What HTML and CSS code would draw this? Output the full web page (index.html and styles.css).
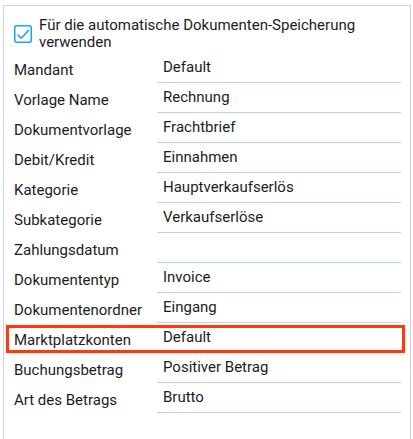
FILE: index.html
```html
<!DOCTYPE html>
<html lang="de">
<head>
<meta charset="utf-8">
<link rel="stylesheet" href="styles.css">
</head>
<body>
<div class="panel">
  <div class="header">
    <span class="checkbox">
      <svg width="18" height="18" viewBox="0 0 18 18"><rect x="0.75" y="0.75" width="16.5" height="16.5" rx="2" fill="none" stroke="#1aa3ef" stroke-width="1.5"/><path d="M3.5 9.5 L7.3 13.2 L14.8 5" fill="none" stroke="#1aa3ef" stroke-width="1.6"/></svg>
    </span>
    <span class="header-text">Für die automatische Dokumenten-Speicherung verwenden</span>
  </div>
  <div class="rows">
    <div class="row"><div class="label">Mandant</div><div class="value">Default</div></div>
    <div class="row"><div class="label">Vorlage Name</div><div class="value">Rechnung</div></div>
    <div class="row"><div class="label">Dokumentvorlage</div><div class="value">Frachtbrief</div></div>
    <div class="row"><div class="label">Debit/Kredit</div><div class="value">Einnahmen</div></div>
    <div class="row"><div class="label">Kategorie</div><div class="value">Hauptverkaufserlös</div></div>
    <div class="row"><div class="label">Subkategorie</div><div class="value">Verkaufserlöse</div></div>
    <div class="row"><div class="label">Zahlungsdatum</div><div class="value"></div></div>
    <div class="row"><div class="label">Dokumententyp</div><div class="value">Invoice</div></div>
    <div class="row"><div class="label">Dokumentenordner</div><div class="value">Eingang</div></div>
    <div class="row highlighted"><div class="label">Marktplatzkonten</div><div class="value">Default</div></div>
    <div class="row"><div class="label">Buchungsbetrag</div><div class="value">Positiver Betrag</div></div>
    <div class="row"><div class="label">Art des Betrags</div><div class="value">Brutto</div></div>
  </div>
</div>
</body>
</html>
```
FILE: styles.css
```css
html, body {
  margin: 0;
  padding: 0;
  background: #ffffff;
}
body {
  font-family: Roboto, "Liberation Sans", sans-serif;
  font-size: 15px;
  color: #1c1c1c;
  overflow: hidden;
}
.panel {
  margin: 5px 0 0 3px;
  width: 408px;
  height: 460px;
  border: 1px solid #c9d6dc;
  border-bottom: none;
  box-sizing: border-box;
}
.header {
  display: flex;
  align-items: flex-start;
  padding: 11px 20px 0 10px;
  line-height: 17px;
}
.checkbox {
  flex: none;
  width: 18px;
  height: 18px;
  margin-top: 8px;
  margin-right: 7px;
}
.checkbox svg {
  display: block;
}
.header-text {
  flex: 1;
}
.rows {
  margin-top: 2px;
  padding: 0 9px 0 10px;
}
.row {
  position: relative;
  display: grid;
  grid-template-columns: 143px 1fr;
  height: 30px;
}
.label {
  padding-top: 8px;
  line-height: 18px;
}
.value {
  padding: 5px 0 0 6px;
  line-height: 18px;
  border-bottom: 1px solid #bcd2dc;
  box-sizing: border-box;
}
.highlighted::after {
  content: "";
  position: absolute;
  left: -8px;
  right: -4px;
  top: 2px;
  bottom: 0;
  border: 3px solid #fb3a12;
  box-shadow: 0 0 1px rgba(251, 58, 18, 0.5);
}
```
